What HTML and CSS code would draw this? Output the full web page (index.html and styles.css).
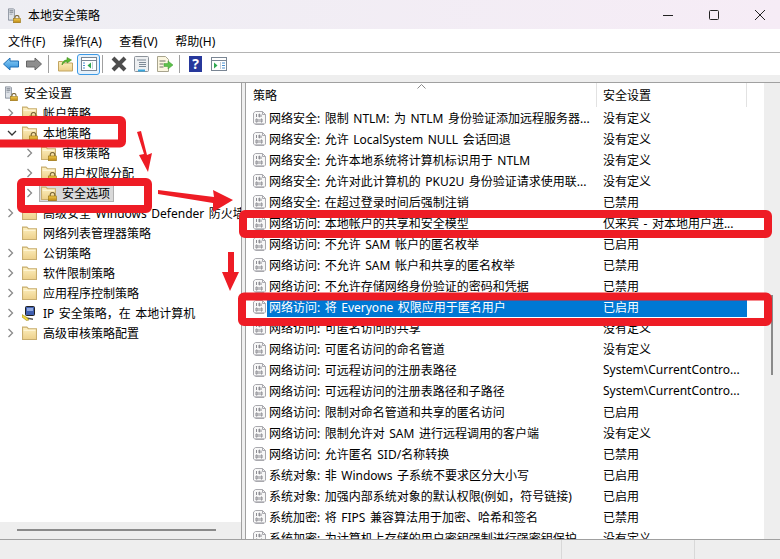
FILE: index.html
```html
<!DOCTYPE html>
<html lang="zh-CN">
<head>
  <meta charset="UTF-8" />
  <title>本地安全策略</title>
  <link rel="stylesheet" href="styles.css">
</head>
<body>
  <svg class="defs" width="0" height="0">
    <defs>
      <linearGradient id="blueArrow" x1="0" y1="0" x2="0" y2="1">
        <stop offset="0" stop-color="#8fd0f5" />
        <stop offset="1" stop-color="#2f8fdc" />
      </linearGradient>
      <linearGradient id="folderFill" x1="0" y1="0" x2="0" y2="1">
        <stop offset="0" stop-color="#fdf0c0" />
        <stop offset="1" stop-color="#edd08a" />
      </linearGradient>
      <linearGradient id="lockFill" x1="0" y1="0" x2="0" y2="1">
        <stop offset="0" stop-color="#f2c94a" />
        <stop offset="1" stop-color="#b98614" />
      </linearGradient>
      <symbol id="folder" viewBox="0 0 14 14">
        <path d="M.5 13V1.5h4l1.5 1.5h7.5V13z" fill="url(#folderFill)" stroke="#c8ad6e" />
        <path d="M1.5 4.5h11" stroke="#fff6d8" />
      </symbol>
      <symbol id="lock" viewBox="0 0 9 9">
        <path d="M2.2 4V2.8a2.3 2.3 0 0 1 4.6 0V4" fill="none" stroke="#7d6a3a" stroke-width="1.2" />
        <rect x=".5" y="4" width="8" height="4.7" fill="url(#lockFill)" stroke="#96700f" stroke-width=".6" />
      </symbol>
      <symbol id="server" viewBox="0 0 12 16">
        <path d="M.5.5h7l1 1V15.5h-8z" fill="#dfe3e8" stroke="#6e7785" />
        <path d="M2 3h5M2 5h5" stroke="#59616e" />
        <rect x="2" y="7" width="4" height="1" fill="#8a93a0" />
      </symbol>
      <symbol id="policy" viewBox="0 0 13 14">
        <path d="M2.5.5h7l3 3v8.5l-1.5 1.5H2.5l-2-1.5V2z" fill="#f7f7f7" stroke="#a9a9ae" />
        <path d="M9.5.5v3h3" fill="none" stroke="#a9a9ae" />
        <path d="M3.5 3v3M8 3.500v2.500M6 3h.6v3H6zM3 8h1.200v3H3zM6 8v3M8 8h1v3H8z" fill="none" stroke="#8c8c92" />
        <path d="M1.500 12.500h9.500" stroke="#c4c4c8" />
      </symbol>
    </defs>
  </svg>

  <div class="window">
    <header class="titlebar">
      <span class="app-icon">
        <svg class="ic-server"><use href="#server" /></svg>
        <svg class="ic-server-lock"><use href="#lock" /></svg>
      </span>
      <span class="title-text">本地安全策略</span>
      <div class="win-controls">
        <svg width="12" height="12" viewBox="0 0 12 12"><path d="M1 6.500h10" stroke="#222" /></svg>
        <svg width="12" height="12" viewBox="0 0 12 12"><rect x="1.500" y="1.500" width="9" height="9" rx="1" fill="none" stroke="#222" /></svg>
        <svg width="12" height="12" viewBox="0 0 12 12"><path d="M1 1l10 10M11 1L1 11" stroke="#222" /></svg>
      </div>
    </header>

    <nav class="menubar">
      <span>文件(F)</span>
      <span>操作(A)</span>
      <span>查看(V)</span>
      <span>帮助(H)</span>
    </nav>

    <div class="toolbar">
      <svg class="tool tool-back" viewBox="0 0 16 14"><path d="M.5 7L7 1v3h8.500v6H7v3z" fill="url(#blueArrow)" stroke="#1f6fb5" /></svg>
      <svg class="tool tool-forward" viewBox="0 0 16 14"><path d="M15.500 7L9 1v3H.5v6H9v3z" fill="#8e8e8e" stroke="#666" /></svg>
      <i class="tool-sep sep-a"></i>
      <svg class="tool tool-up" viewBox="0 0 15 16">
        <path d="M.5 15V5.500h4L6 7h8.500v8z" fill="url(#folderFill)" stroke="#c2a560" />
        <path d="M4 9c0-3 2-5 5-5V1.500L13.500 4 9 7V5.500C7 5.500 5.500 7 4 9z" fill="#5cb82e" stroke="#3f8f1c" stroke-width=".6" />
      </svg>
      <span class="tool-active">
        <svg width="16" height="14" viewBox="0 0 16 14">
          <rect x=".5" y=".5" width="15" height="13" fill="#fff" stroke="#7a8694" />
          <path d="M.5 3.500h15" stroke="#7a8694" />
          <path d="M10 5.500v6L6.500 8.500z" fill="#2fa84f" />
          <path d="M2 6h2M2 8.500h2M2 11h2" stroke="#4a90d0" />
          <path d="M11.500 5v7" stroke="#c5ccd4" />
        </svg>
      </span>
      <i class="tool-sep sep-b"></i>
      <svg class="tool tool-delete" viewBox="0 0 16 16"><path d="M2 2l12 12M14 2L2 14" stroke="#4d4d4d" stroke-width="4" /></svg>
      <svg class="tool tool-props" viewBox="0 0 15 16">
        <rect x=".5" y=".5" width="14" height="15" rx="1" fill="#eef0f2" stroke="#8d939a" />
        <path d="M3 4h9M5 6.500h7M5 8.500h7M5 10.500h7" stroke="#7e8a96" />
        <path d="M4 14.500h7" stroke="#37a6dd" stroke-width="2" />
      </svg>
      <svg class="tool tool-export" viewBox="0 0 16 16">
        <path d="M.5.5h8l3 3v12H.5z" fill="#fbf6df" stroke="#a8a48e" />
        <path d="M2.500 5h6M2.500 8h4M2.500 11h4" stroke="#6f6f66" />
        <path d="M7 7.500h4V5l5 4-5 4v-2.500H7z" fill="#5cc04a" stroke="#3f9a32" stroke-width=".5" />
      </svg>
      <i class="tool-sep sep-c"></i>
      <span class="tool-help">?</span>
      <svg class="tool tool-panel" viewBox="0 0 16 14">
        <rect x=".5" y=".5" width="15" height="13" fill="#fff" stroke="#7a8694" />
        <path d="M.5 3.500h15" stroke="#7a8694" />
        <path d="M3 5.500v6L6.500 8.500z" fill="#2fa84f" />
        <path d="M11 6h3M11 8.500h3M11 11h3" stroke="#4a90d0" />
        <path d="M9.500 5v7" stroke="#c5ccd4" />
      </svg>
    </div>
    <div class="toolbar-gap"></div>

    <main class="panes">
      <aside class="tree">
        <div class="tree-row root">
          <span class="app-icon">
            <svg class="ic-server"><use href="#server" /></svg>
            <svg class="ic-server-lock"><use href="#lock" /></svg>
          </span>
          <span class="tree-label">安全设置</span>
        </div>
        <div class="tree-row">
          <svg class="chev"><path d="M1.500 1l4 4-4 4" /></svg>
          <span class="folder"><svg class="ic-folder"><use href="#folder" /></svg><svg class="ic-lock"><use href="#lock" /></svg></span>
          <span class="tree-label">帐户策略</span>
        </div>
        <div class="tree-row">
          <svg class="chev"><path d="M1 3l4 4 4-4" class="open" /></svg>
          <span class="folder"><svg class="ic-folder"><use href="#folder" /></svg><svg class="ic-lock"><use href="#lock" /></svg></span>
          <span class="tree-label">本地策略</span>
        </div>
        <div class="tree-row sub">
          <svg class="chev"><path d="M1.500 1l4 4-4 4" /></svg>
          <span class="folder"><svg class="ic-folder"><use href="#folder" /></svg><svg class="ic-lock"><use href="#lock" /></svg></span>
          <span class="tree-label">审核策略</span>
        </div>
        <div class="tree-row sub">
          <svg class="chev"><path d="M1.500 1l4 4-4 4" /></svg>
          <span class="folder"><svg class="ic-folder"><use href="#folder" /></svg><svg class="ic-lock"><use href="#lock" /></svg></span>
          <span class="tree-label">用户权限分配</span>
        </div>
        <div class="tree-row sub">
          <svg class="chev"><path d="M1.500 1l4 4-4 4" /></svg>
          <span class="tree-selected">
            <span class="folder"><svg class="ic-folder"><use href="#folder" /></svg><svg class="ic-lock"><use href="#lock" /></svg></span>
            <span class="tree-label">安全选项</span>
          </span>
        </div>
        <div class="tree-row">
          <svg class="chev"><path d="M1.500 1l4 4-4 4" /></svg>
          <span class="folder"><svg class="ic-folder"><use href="#folder" /></svg></span>
          <span class="tree-label">高级安全 Windows Defender 防火墙</span>
        </div>
        <div class="tree-row">
          <span class="chev-space"></span>
          <span class="folder"><svg class="ic-folder"><use href="#folder" /></svg></span>
          <span class="tree-label">网络列表管理器策略</span>
        </div>
        <div class="tree-row">
          <svg class="chev"><path d="M1.500 1l4 4-4 4" /></svg>
          <span class="folder"><svg class="ic-folder"><use href="#folder" /></svg></span>
          <span class="tree-label">公钥策略</span>
        </div>
        <div class="tree-row">
          <svg class="chev"><path d="M1.500 1l4 4-4 4" /></svg>
          <span class="folder"><svg class="ic-folder"><use href="#folder" /></svg></span>
          <span class="tree-label">软件限制策略</span>
        </div>
        <div class="tree-row">
          <svg class="chev"><path d="M1.500 1l4 4-4 4" /></svg>
          <span class="folder"><svg class="ic-folder"><use href="#folder" /></svg></span>
          <span class="tree-label">应用程序控制策略</span>
        </div>
        <div class="tree-row">
          <svg class="chev"><path d="M1.500 1l4 4-4 4" /></svg>
          <span class="folder">
            <svg class="ic-folder" viewBox="0 0 15 16">
              <rect x="3.500" y="1.500" width="9" height="9" rx="1" fill="#3f5fb0" stroke="#222" />
              <rect x="5" y="3" width="6" height="3" fill="#8fa8e0" />
              <path d="M3 12l8 1.500v1.500L3 13.500z" fill="#555" />
              <path d="M0 9.500l5 3 2 2.500-2.500.5L0 12z" fill="#f3d73a" stroke="#8d7a14" stroke-width=".5" />
            </svg>
          </span>
          <span class="tree-label">IP 安全策略，在 本地计算机</span>
        </div>
        <div class="tree-row">
          <svg class="chev"><path d="M1.500 1l4 4-4 4" /></svg>
          <span class="folder"><svg class="ic-folder"><use href="#folder" /></svg></span>
          <span class="tree-label">高级审核策略配置</span>
        </div>
        <div class="hscroll"><i></i></div>
      </aside>

      <section class="list">
        <div class="list-main">
          <div class="list-head">
            <span class="head-name">策略</span>
            <span class="head-value">安全设置</span>
            <svg class="sort-caret" width="9" height="5" viewBox="0 0 9 5"><path d="M.5 4.500l4-4 4 4" fill="none" stroke="#8a8a8a" /></svg>
          </div>
          <div class="row"><svg class="ic-policy"><use href="#policy" /></svg><div class="cells"><span class="name">网络安全: 限制 NTLM: 为 NTLM 身份验证添加远程服务器...</span><span class="value">没有定义</span></div></div>
          <div class="row"><svg class="ic-policy"><use href="#policy" /></svg><div class="cells"><span class="name">网络安全: 允许 LocalSystem NULL 会话回退</span><span class="value">没有定义</span></div></div>
          <div class="row"><svg class="ic-policy"><use href="#policy" /></svg><div class="cells"><span class="name">网络安全: 允许本地系统将计算机标识用于 NTLM</span><span class="value">没有定义</span></div></div>
          <div class="row"><svg class="ic-policy"><use href="#policy" /></svg><div class="cells"><span class="name">网络安全: 允许对此计算机的 PKU2U 身份验证请求使用联...</span><span class="value">没有定义</span></div></div>
          <div class="row"><svg class="ic-policy"><use href="#policy" /></svg><div class="cells"><span class="name">网络安全: 在超过登录时间后强制注销</span><span class="value">已禁用</span></div></div>
          <div class="row"><svg class="ic-policy"><use href="#policy" /></svg><div class="cells"><span class="name">网络访问: 本地帐户的共享和安全模型</span><span class="value">仅来宾 - 对本地用户进...</span></div></div>
          <div class="row"><svg class="ic-policy"><use href="#policy" /></svg><div class="cells"><span class="name">网络访问: 不允许 SAM 帐户的匿名枚举</span><span class="value">已启用</span></div></div>
          <div class="row"><svg class="ic-policy"><use href="#policy" /></svg><div class="cells"><span class="name">网络访问: 不允许 SAM 帐户和共享的匿名枚举</span><span class="value">已禁用</span></div></div>
          <div class="row"><svg class="ic-policy"><use href="#policy" /></svg><div class="cells"><span class="name">网络访问: 不允许存储网络身份验证的密码和凭据</span><span class="value">已禁用</span></div></div>
          <div class="row selected"><svg class="ic-policy"><use href="#policy" /></svg><div class="cells"><span class="name">网络访问: 将 Everyone 权限应用于匿名用户</span><span class="value">已启用</span></div></div>
          <div class="row"><svg class="ic-policy"><use href="#policy" /></svg><div class="cells"><span class="name">网络访问: 可匿名访问的共享</span><span class="value">没有定义</span></div></div>
          <div class="row"><svg class="ic-policy"><use href="#policy" /></svg><div class="cells"><span class="name">网络访问: 可匿名访问的命名管道</span><span class="value">没有定义</span></div></div>
          <div class="row"><svg class="ic-policy"><use href="#policy" /></svg><div class="cells"><span class="name">网络访问: 可远程访问的注册表路径</span><span class="value">System\CurrentContro...</span></div></div>
          <div class="row"><svg class="ic-policy"><use href="#policy" /></svg><div class="cells"><span class="name">网络访问: 可远程访问的注册表路径和子路径</span><span class="value">System\CurrentContro...</span></div></div>
          <div class="row"><svg class="ic-policy"><use href="#policy" /></svg><div class="cells"><span class="name">网络访问: 限制对命名管道和共享的匿名访问</span><span class="value">已启用</span></div></div>
          <div class="row"><svg class="ic-policy"><use href="#policy" /></svg><div class="cells"><span class="name">网络访问: 限制允许对 SAM 进行远程调用的客户端</span><span class="value">没有定义</span></div></div>
          <div class="row"><svg class="ic-policy"><use href="#policy" /></svg><div class="cells"><span class="name">网络访问: 允许匿名 SID/名称转换</span><span class="value">已禁用</span></div></div>
          <div class="row"><svg class="ic-policy"><use href="#policy" /></svg><div class="cells"><span class="name">系统对象: 非 Windows 子系统不要求区分大小写</span><span class="value">已启用</span></div></div>
          <div class="row"><svg class="ic-policy"><use href="#policy" /></svg><div class="cells"><span class="name">系统对象: 加强内部系统对象的默认权限(例如，符号链接)</span><span class="value">已启用</span></div></div>
          <div class="row"><svg class="ic-policy"><use href="#policy" /></svg><div class="cells"><span class="name">系统加密: 将 FIPS 兼容算法用于加密、哈希和签名</span><span class="value">已禁用</span></div></div>
          <div class="row"><svg class="ic-policy"><use href="#policy" /></svg><div class="cells"><span class="name">系统加密: 为计算机上存储的用户密钥强制进行强密钥保护</span><span class="value">没有定义</span></div></div>
        </div>
        <div class="vscroll"><i></i></div>
      </section>
    </main>

    <footer class="statusbar">
      <span class="status-a"></span>
      <span class="status-b"></span>
      <span></span>
    </footer>
  </div>

  <!-- red annotations drawn over the screenshot -->
  <svg class="marks" width="780" height="559" viewBox="0 0 780 559">
    <g fill="none" stroke="#ee1c25" stroke-width="8" stroke-linejoin="round">
      <rect x="-8" y="120" width="130" height="23.500" rx="2" />
      <rect x="21" y="182" width="127" height="27" rx="2" />
      <rect x="243" y="214" width="525" height="20" rx="2" />
      <rect x="242" y="296.500" width="526" height="25.500" rx="2" />
    </g>
    <g fill="#ee1c25">
      <path d="M137 132l4-1 6 24 5-2-4 19-9-17 5-1z" />
      <path d="M158 190l56 7-1-7 20 10-20 12v-9l-55-9z" />
      <path d="M228 252h6v20h5l-9 19-8-19h6z" />
    </g>
  </svg>
</body>
</html>
```

FILE: styles.css
```css
* {
  margin: 0;
  padding: 0;
  box-sizing: border-box;
}

html, body {
  width: 780px;
  height: 559px;
  overflow: hidden;
}

body {
  position: relative;
  background: #fff;
  color: #000;
  font-family: "Noto Sans", "Noto Sans CJK SC", sans-serif;
  font-size: 12px;
  word-spacing: 1.4px;
}

.defs {
  position: absolute;
}

.window {
  display: flex;
  flex-direction: column;
  height: 559px;
}

/* title bar */
.titlebar {
  display: flex;
  align-items: center;
  height: 29px;
  padding-left: 8px;
  background: linear-gradient(90deg, #eeeef3, #f6ecf6);
}

.app-icon {
  position: relative;
  display: block;
  width: 13px;
  height: 16px;
  flex: none;
}

.ic-server {
  display: block;
  width: 9px;
  height: 15px;
}

.ic-server-lock {
  position: absolute;
  right: 0;
  bottom: 0;
  width: 8px;
  height: 8px;
}

.title-text {
  margin-left: 7px;
}

.win-controls {
  display: flex;
  gap: 34px;
  margin-left: auto;
  padding-right: 14px;
}

/* menu */
.menubar {
  display: flex;
  align-items: center;
  height: 24px;
  padding-left: 8px;
  gap: 17.5px;
  background: #fff;
  border-bottom: 1px solid #b4b4b4;
}

/* toolbar */
.toolbar {
  display: flex;
  align-items: center;
  height: 22px;
  padding-left: 3px;
  background: #fff;
}

.tool {
  display: block;
  flex: none;
}

.tool-back, .tool-forward {
  width: 16px;
  height: 14px;
}

.tool-forward {
  margin-left: 7px;
}

.tool-sep {
  display: block;
  width: 1px;
  height: 18px;
  background: #a0a0a0;
}

.sep-a {
  margin-left: 6px;
}

.tool-up {
  width: 15px;
  height: 16px;
  margin-left: 9px;
}

.tool-active {
  display: flex;
  align-items: center;
  justify-content: center;
  width: 23px;
  height: 21px;
  margin-left: 4px;
  background: #e5f1fb;
  border: 1px solid #3c9ae6;
  border-radius: 3px;
}

.sep-b {
  margin-left: 2px;
}

.tool-delete {
  width: 16px;
  height: 16px;
  margin-left: 8px;
}

.tool-props {
  width: 15px;
  height: 16px;
  margin-left: 7px;
}

.tool-export {
  width: 16px;
  height: 16px;
  margin-left: 8px;
}

.sep-c {
  margin-left: 6px;
}

.tool-help {
  display: block;
  width: 13px;
  height: 16px;
  margin-left: 9px;
  background: #27389b;
  color: #fff;
  font-size: 14px;
  font-weight: 700;
  line-height: 16px;
  text-align: center;
}

.tool-panel {
  width: 16px;
  height: 14px;
  margin-left: 9px;
}

.toolbar-gap {
  height: 7px;
  background: #eeeeee;
}

/* panes */
.panes {
  flex: 1;
  display: flex;
  min-height: 0;
  background: #efefef;
  border-top: 1px solid #a0a0a0;
}

.tree {
  display: flex;
  flex-direction: column;
  width: 242px;
  flex: none;
  overflow: hidden;
  background: #fff;
  border-right: 1px solid #a0a0a0;
}

.tree-row {
  display: flex;
  align-items: center;
  height: 20px;
  flex: none;
  padding-left: 7px;
  white-space: nowrap;
}

.tree-row.root {
  padding-left: 5px;
}

.tree-row.root .tree-label {
  margin-left: 6px;
}

.tree-row.sub {
  padding-left: 26px;
}

.chev, .chev-space {
  display: block;
  width: 10px;
  height: 10px;
  flex: none;
}

.chev path {
  fill: none;
  stroke: #8a8a8a;
  stroke-width: 1.3;
}

.chev path.open {
  stroke: #333;
}

.folder {
  position: relative;
  display: block;
  width: 15px;
  height: 16px;
  margin-left: 5px;
  flex: none;
}

.ic-folder {
  display: block;
  width: 15px;
  height: 16px;
}

.ic-lock {
  position: absolute;
  right: -1px;
  bottom: 0;
  width: 9px;
  height: 9px;
}

.tree-label {
  margin-left: 6px;
}

.tree-selected {
  display: flex;
  align-items: center;
  height: 18px;
  margin-left: 3px;
  padding-right: 3px;
  background: #d9d9d9;
  border: 1px solid #b0b0b0;
}

.tree-selected .folder {
  margin-left: 1px;
}

.hscroll {
  height: 17px;
  flex: none;
  margin-top: auto;
  padding: 7px 0 0 17px;
  background: #eeeeee;
}

.hscroll i {
  display: block;
  width: 199px;
  height: 2px;
  background: #8a8a8a;
}

.list {
  display: flex;
  width: 535px;
  margin-left: 3px;
  flex: none;
  background: #fff;
  border-left: 1px solid #a0a0a0;
}

.list-main {
  flex: 1;
  min-width: 0;
  overflow: hidden;
}

.list-head {
  position: relative;
  display: flex;
  align-items: center;
  height: 24px;
}

.head-name {
  width: 351px;
  height: 100%;
  padding-left: 7px;
  line-height: 25px;
  border-right: 1px solid #e2e2e2;
}

.head-value {
  width: 150px;
  height: 100%;
  padding-left: 6px;
  line-height: 25px;
  border-right: 1px solid #e2e2e2;
}

.sort-caret {
  position: absolute;
  left: 171px;
  top: 1px;
}

.row {
  display: flex;
  align-items: center;
  height: 21px;
  padding-left: 7px;
  white-space: nowrap;
}

.ic-policy {
  display: block;
  width: 13px;
  height: 14px;
  flex: none;
  margin-right: 1px;
}

.cells {
  display: flex;
  align-items: center;
  height: 100%;
}

.name {
  width: 330px;
  padding-left: 2px;
  overflow: hidden;
}

.value {
  width: 150px;
  padding-left: 6px;
}

.row.selected .cells {
  background: #0078d4;
  color: #fff;
}

.vscroll {
  width: 16px;
  flex: none;
  padding: 212px 0 0 7px;
  background: #eeeeee;
}

.vscroll i {
  display: block;
  width: 2px;
  height: 80px;
  background: #8a8a8a;
}

/* status bar */
.statusbar {
  display: flex;
  height: 20px;
  flex: none;
  background: #eeeeee;
  border-top: 1px solid #a0a0a0;
}

.statusbar span {
  display: block;
}

.status-a, .status-b {
  border-right: 1px solid #d8d8d8;
}

.status-a {
  width: 562px;
}

.status-b {
  width: 133px;
}

/* annotations */
.marks {
  position: absolute;
  left: 0;
  top: 0;
  pointer-events: none;
}
```
